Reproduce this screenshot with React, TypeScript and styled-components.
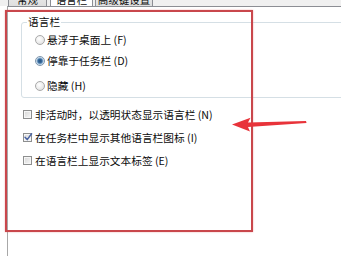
import React from "react";
import styled, { createGlobalStyle } from "styled-components";

const GlobalStyle = createGlobalStyle`
  html, body {
    margin: 0;
    padding: 0;
    background: #ffffff;
  }
  body {
    font-family: "Noto Sans CJK SC", "Noto Sans", "DejaVu Sans", sans-serif;
    color: #0a0a0a;
  }
`;

const Root = styled.div`
  position: relative;
  width: 341px;
  height: 256px;
  overflow: hidden;
  background: #ffffff;
`;

const TabStrip = styled.div`
  display: flex;
  align-items: flex-end;
  height: 6px;
  padding-left: 8px;
  background: #f0f0f0;
  overflow: hidden;
`;

const Tab = styled.div<{ $w: number; $gap: number; $active?: boolean }>`
  flex: none;
  display: flex;
  align-items: flex-end;
  justify-content: center;
  box-sizing: border-box;
  width: ${(p) => p.$w}px;
  height: 20px;
  margin-right: ${(p) => p.$gap}px;
  border: 1px solid #8c8e94;
  border-bottom: none;
  background: ${(p) =>
    p.$active ? "#ffffff" : "linear-gradient(#f2f2f2, #dedede)"};
  font-size: 10.5px;
  line-height: 12px;
`;

const Panel = styled.div`
  box-sizing: border-box;
  margin-left: 7px;
  width: 420px;
  height: 250px;
  border-top: 1px solid #8c8e94;
  border-left: 1px solid #a8a8a8;
  background: #ffffff;
  padding-left: 13px;
  padding-top: 9px;
`;

const GroupBox = styled.fieldset`
  box-sizing: border-box;
  width: 400px;
  margin: 0;
  padding: 0 0 1.5px 13px;
  border: 1px solid #d5dfe5;
  border-radius: 3px;
`;

const Legend = styled.legend`
  margin-left: -8px;
  padding: 0 1px;
  font-size: 10.7px;
  line-height: 12px;
`;

const OptionRow = styled.div<{ $mt: number; $h: number }>`
  display: flex;
  align-items: center;
  height: ${(p) => p.$h}px;
  margin-top: ${(p) => p.$mt}px;
  font-size: 10.7px;
  line-height: 12px;
  white-space: nowrap;
`;

const Radio = styled.span<{ $checked?: boolean }>`
  flex: none;
  box-sizing: border-box;
  width: 10px;
  height: 10px;
  margin-right: 2px;
  border-radius: 50%;
  border: 1px solid ${(p) => (p.$checked ? "#7e96ad" : "#a9a9a9")};
  background: ${(p) =>
    p.$checked
      ? "radial-gradient(circle at 50% 50%, #24507e 0, #3a6c9e 2px, #8fb3d3 3px, #e6eef6 4px)"
      : "radial-gradient(circle at 40% 35%, #ffffff 0, #e4e4e4 75%)"};
`;

const CheckList = styled.div`
  padding-left: 2px;
  margin-top: 5px;
`;

const CheckBox = styled.span`
  flex: none;
  position: relative;
  box-sizing: border-box;
  width: 9px;
  height: 9px;
  margin-right: 3px;
  border: 1px solid #8e8f8f;
  background: linear-gradient(135deg, #d6d6d6, #f8f8f8);
  box-shadow: inset 0 0 0 1px #f6f6f6;
`;

const CheckMark = styled.svg`
  position: absolute;
  left: -1px;
  top: -2px;
  width: 10px;
  height: 10px;
`;

const Frame = styled.div`
  position: absolute;
  left: 5px;
  top: 10px;
  width: 248px;
  height: 222px;
  box-sizing: border-box;
  border: 2.5px solid #c9474c;
  box-shadow: 0 0 1.5px rgba(230, 110, 110, 0.6);
  pointer-events: none;
`;

const Arrow = styled.svg`
  position: absolute;
  left: 228px;
  top: 112px;
  width: 84px;
  height: 24px;
  pointer-events: none;
`;

const radios = [
  { label: "悬浮于桌面上 (F)", mt: 1.5, checked: false },
  { label: "停靠于任务栏 (D)", mt: 1, checked: true },
  { label: "隐藏 (H)", mt: 5, checked: false },
];

const checks = [
  { label: "非活动时，以透明状态显示语言栏 (N)", checked: false },
  { label: "在任务栏中显示其他语言栏图标 (I)", checked: true },
  { label: "在语言栏上显示文本标签 (E)", checked: false },
];

export default function App() {
  return (
    <Root>
      <GlobalStyle />
      <TabStrip>
        <Tab $w={39} $gap={3}>常规</Tab>
        <Tab $w={43} $gap={2} $active>
          语言栏
        </Tab>
        <Tab $w={58} $gap={0}>高级键设置</Tab>
      </TabStrip>
      <Panel>
        <GroupBox>
          <Legend>语言栏</Legend>
          {radios.map((r) => (
            <OptionRow key={r.label} $mt={r.mt} $h={20}>
              <Radio $checked={r.checked} />
              {r.label}
            </OptionRow>
          ))}
        </GroupBox>
        <CheckList>
          {checks.map((c) => (
            <OptionRow key={c.label} $mt={0} $h={23}>
              <CheckBox>
                {c.checked && (
                  <CheckMark viewBox="0 0 10 10">
                    <path
                      d="M2 5.2 L4.2 7.6 L8.6 1.8"
                      fill="none"
                      stroke="#4a64a3"
                      strokeWidth="1.5"
                      strokeLinecap="round"
                      strokeLinejoin="round"
                    />
                  </CheckMark>
                )}
              </CheckBox>
              {c.label}
            </OptionRow>
          ))}
        </CheckList>
      </Panel>
      <Frame />
      <Arrow viewBox="228 112 84 24">
        <path
          d="M232 124.6 L250.5 117.8 L248 122.4 L306 120.9 L306.5 123.1 L248 127 L250 131.4 Z"
          fill="#e8333a"
        />
      </Arrow>
    </Root>
  );
}
